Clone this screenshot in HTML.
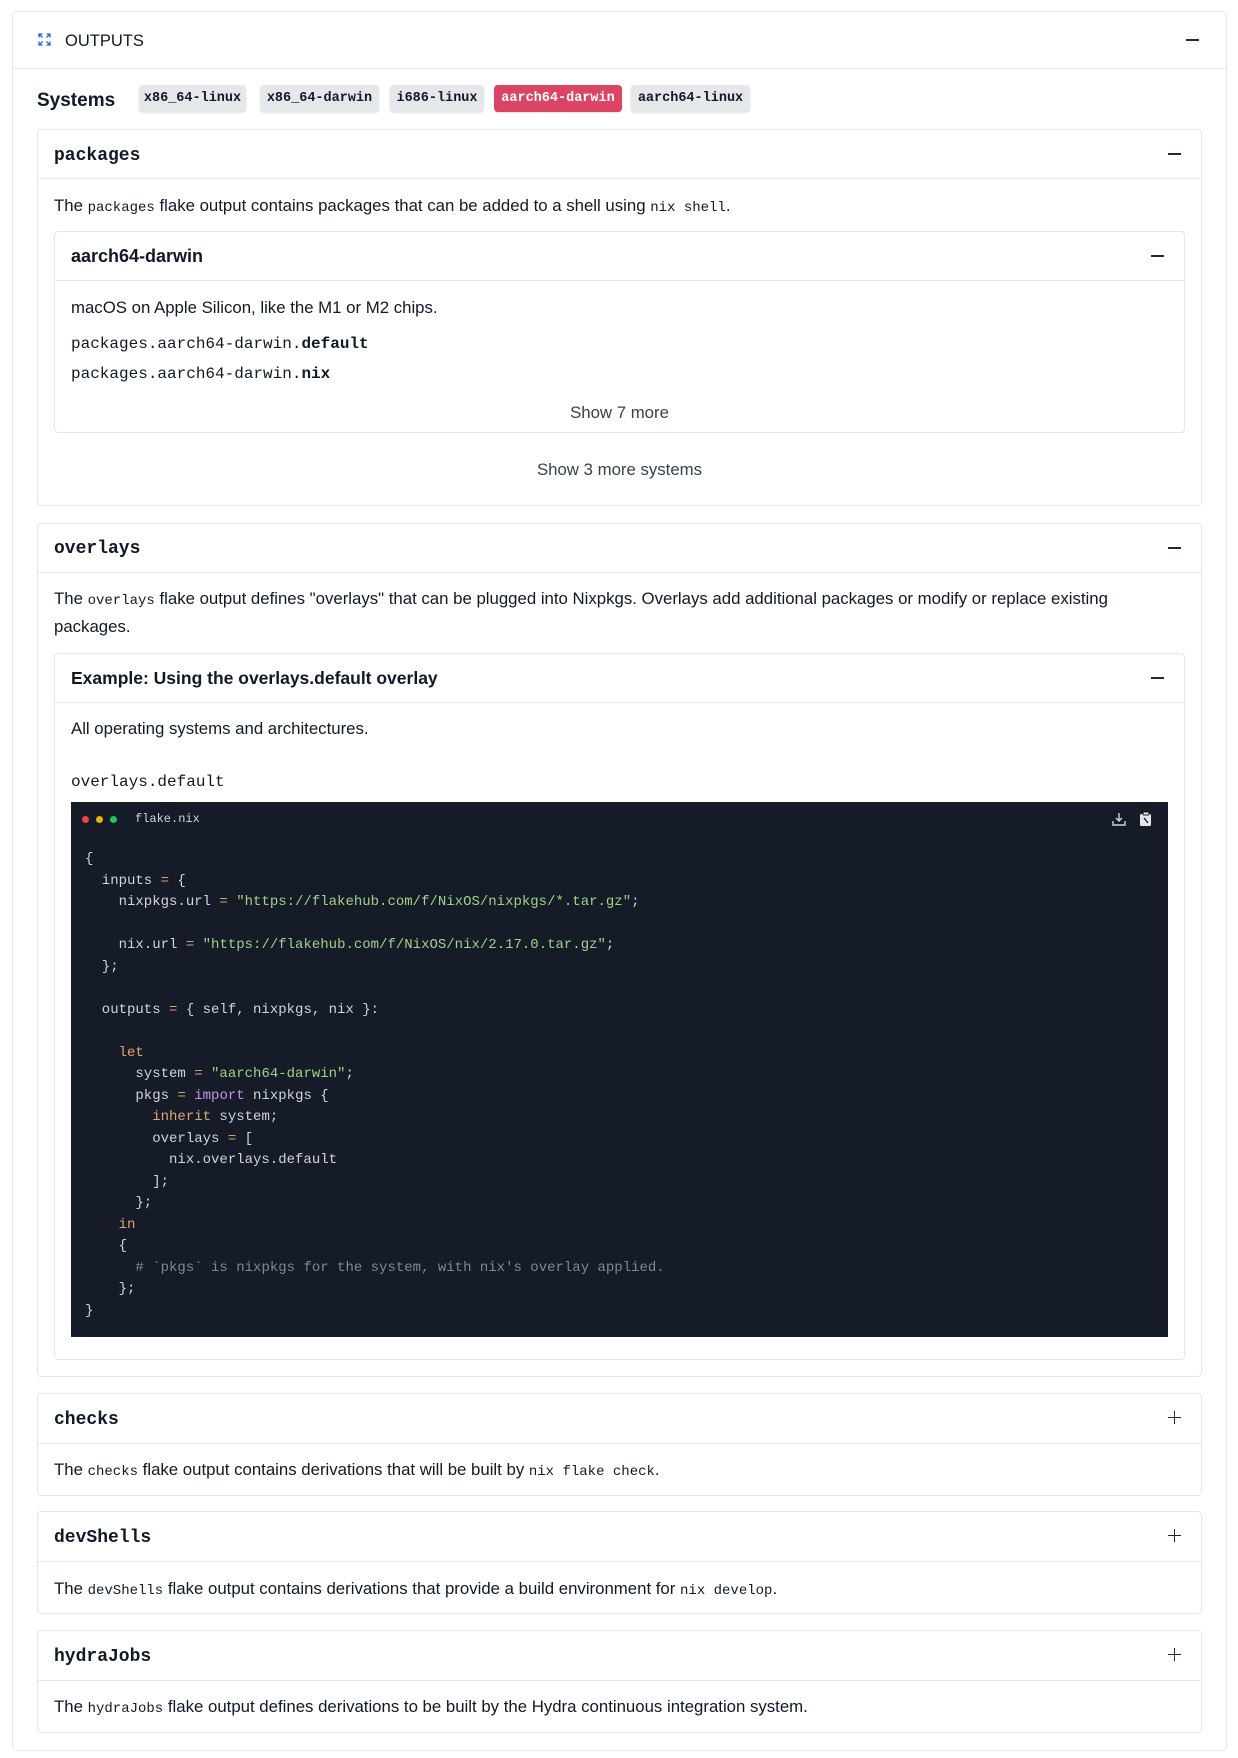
<!DOCTYPE html>
<html><head><meta charset="utf-8">
<style>
*{box-sizing:border-box;margin:0;padding:0}
body{width:1238px;height:1758px;background:#fff;font-family:"Liberation Sans",sans-serif;color:#111827;position:relative;overflow:hidden}
.a{position:absolute}
.card{position:absolute;border:1px solid #e5e7eb;border-radius:4px;background:#fff}
.hd{position:absolute;left:0;right:0;top:0;border-bottom:1px solid #e5e7eb}
.mono{font-family:"Liberation Mono",monospace}
.t{position:absolute;font-size:16.8px;color:#111827;white-space:nowrap;line-height:20px}
.t code{font-family:"Liberation Mono",monospace;font-size:14px}
.ttl{position:absolute;font-family:"Liberation Mono",monospace;font-weight:bold;font-size:18px;line-height:22px}
.minus{position:absolute;width:13px;height:1.6px;background:#1f2937}
.plus{position:absolute;width:13px;height:13px}
.plus:before{content:"";position:absolute;left:0;top:5.7px;width:13px;height:1.6px;background:#1f2937}
.plus:after{content:"";position:absolute;left:5.7px;top:0;width:1.6px;height:13px;background:#1f2937}
.badge{position:absolute;top:85px;height:27px;border-radius:4px;background:#e5e7eb;font-family:"Liberation Mono",monospace;font-weight:bold;font-size:13.5px;line-height:28px;text-align:center;color:#111827;box-shadow:0 1px 2px rgba(0,0,0,.12)}
pre{position:absolute;font-family:"Liberation Mono",monospace;font-size:14px;line-height:21.5px;color:#d1d5db}
.s{color:#a3d08a}.k{color:#e0a571}.p{color:#c792ea}.o{color:#d8a06a}.c{color:#7f8896}
.sub{position:absolute;font-size:18px;font-weight:bold;line-height:22px;color:#111827}
</style></head><body>

<div class="card" style="left:12px;top:11px;width:1215px;height:1740px;border-radius:5px"></div>
<div class="a" style="left:12px;top:68px;width:1215px;height:1px;background:#e5e7eb"></div>
<svg class="a" style="left:38px;top:33px" width="13" height="13" viewBox="0 0 13 13" fill="none" stroke="#2563eb" stroke-width="1.3">
<path d="M1 4.5V1h3.5M1 1l3.5 3.5M12 4.5V1H8.5M12 1L8.5 4.5M1 8.5V12h3.5M1 12l3.5-3.5M12 8.5V12H8.5M12 12L8.5 8.5"/></svg>
<div class="a" style="left:65px;top:31px;font-size:16.5px;line-height:20px">OUTPUTS</div>
<div class="minus" style="left:1186px;top:39px"></div>

<div class="a" style="left:37px;top:90px;font-size:19px;font-weight:bold;line-height:22px">Systems</div>
<div class="badge" style="left:139px;width:107px">x86_64-linux</div>
<div class="badge" style="left:260px;width:119px">x86_64-darwin</div>
<div class="badge" style="left:390px;width:94px">i686-linux</div>
<div class="badge" style="left:494px;width:128px;background:#db4462;color:#fff">aarch64-darwin</div>
<div class="badge" style="left:631px;width:119px">aarch64-linux</div>

<!-- packages -->
<div class="card" style="left:37px;top:129px;width:1165px;height:377px"><div class="hd" style="height:49px"></div></div>
<div class="ttl" style="left:54px;top:145px">packages</div>
<div class="minus" style="left:1168px;top:153px"></div>
<div class="t" style="left:54px;top:196px">The <code>packages</code> flake output contains packages that can be added to a shell using <code>nix shell</code>.</div>

<div class="card" style="left:54px;top:231px;width:1131px;height:202px"><div class="hd" style="height:49px"></div></div>
<div class="sub" style="left:71px;top:245px">aarch64-darwin</div>
<div class="minus" style="left:1151px;top:255px"></div>
<div class="t" style="left:71px;top:298px">macOS on Apple Silicon, like the M1 or M2 chips.</div>
<div class="a mono" style="left:71px;top:334px;font-size:16px;line-height:20px">packages.aarch64-darwin.<b>default</b></div>
<div class="a mono" style="left:71px;top:364px;font-size:16px;line-height:20px">packages.aarch64-darwin.<b>nix</b></div>
<div class="t" style="left:54px;width:1131px;text-align:center;top:403px;color:#374151">Show 7 more</div>
<div class="t" style="left:37px;width:1165px;text-align:center;top:460px;color:#374151">Show 3 more systems</div>

<!-- overlays -->
<div class="card" style="left:37px;top:523px;width:1165px;height:854px"><div class="hd" style="height:49px"></div></div>
<div class="ttl" style="left:54px;top:538px">overlays</div>
<div class="minus" style="left:1168px;top:547px"></div>
<div class="t" style="left:54px;top:589px">The <code>overlays</code> flake output defines "overlays" that can be plugged into Nixpkgs. Overlays add additional packages or modify or replace existing</div>
<div class="t" style="left:54px;top:617px">packages.</div>

<div class="card" style="left:54px;top:653px;width:1131px;height:707px"><div class="hd" style="height:49px"></div></div>
<div class="sub" style="left:71px;top:667px;font-size:17.5px">Example: Using the overlays.default overlay</div>
<div class="minus" style="left:1151px;top:677px"></div>
<div class="t" style="left:71px;top:719px">All operating systems and architectures.</div>
<div class="a mono" style="left:71px;top:772px;font-size:16px;line-height:20px">overlays.default</div>

<div class="a" style="left:71px;top:802px;width:1097px;height:535px;background:#151b27"></div>
<div class="a" style="left:82px;top:816px;width:7px;height:7px;border-radius:50%;background:#ef4444"></div>
<div class="a" style="left:96px;top:816px;width:7px;height:7px;border-radius:50%;background:#eab308"></div>
<div class="a" style="left:110px;top:816px;width:7px;height:7px;border-radius:50%;background:#22c55e"></div>
<div class="a mono" style="left:135px;top:812px;font-size:12px;line-height:14px;color:#d1d5db">flake.nix</div>
<svg class="a" style="left:1112px;top:812px" width="14" height="14" viewBox="0 0 14 14" fill="none" stroke="#d1d5db" stroke-width="1.4"><path d="M7 1v8M4 6l3 3 3-3M1 9v4h12V9"/></svg>
<svg class="a" style="left:1139px;top:811px" width="14" height="16" viewBox="0 0 14 16"><rect x="1" y="3" width="11" height="12" rx="1.5" fill="#e5e7eb"/><rect x="4" y="1" width="6" height="3" rx="1" fill="#e5e7eb" stroke="#151b27" stroke-width="1"/><path d="M5 7l4 5" stroke="#151b27" stroke-width="1.4"/></svg>

<pre style="left:85px;top:849px">{
  inputs <span class="o">=</span> {
    nixpkgs.url <span class="o">=</span> <span class="s">"https://flakehub.com/f/NixOS/nixpkgs/*.tar.gz"</span>;

    nix.url <span class="o">=</span> <span class="s">"https://flakehub.com/f/NixOS/nix/2.17.0.tar.gz"</span>;
  };

  outputs <span class="o">=</span> { self, nixpkgs, nix }:

    <span class="k">let</span>
      system <span class="o">=</span> <span class="s">"aarch64-darwin"</span>;
      pkgs <span class="o">=</span> <span class="p">import</span> nixpkgs {
        <span class="k">inherit</span> system;
        overlays <span class="o">=</span> [
          nix.overlays.default
        ];
      };
    <span class="k">in</span>
    {
      <span class="c"># `pkgs` is nixpkgs for the system, with nix's overlay applied.</span>
    };
}</pre>

<!-- checks -->
<div class="card" style="left:37px;top:1393px;width:1165px;height:103px"><div class="hd" style="height:50px"></div></div>
<div class="ttl" style="left:54px;top:1409px">checks</div>
<div class="plus" style="left:1168px;top:1411px"></div>
<div class="t" style="left:54px;top:1460px">The <code>checks</code> flake output contains derivations that will be built by <code>nix flake check</code>.</div>

<div class="card" style="left:37px;top:1511px;width:1165px;height:103px"><div class="hd" style="height:50px"></div></div>
<div class="ttl" style="left:54px;top:1527px">devShells</div>
<div class="plus" style="left:1168px;top:1529px"></div>
<div class="t" style="left:54px;top:1579px">The <code>devShells</code> flake output contains derivations that provide a build environment for <code>nix develop</code>.</div>

<div class="card" style="left:37px;top:1630px;width:1165px;height:103px"><div class="hd" style="height:50px"></div></div>
<div class="ttl" style="left:54px;top:1646px">hydraJobs</div>
<div class="plus" style="left:1168px;top:1648px"></div>
<div class="t" style="left:54px;top:1697px">The <code>hydraJobs</code> flake output defines derivations to be built by the Hydra continuous integration system.</div>

</body></html>
